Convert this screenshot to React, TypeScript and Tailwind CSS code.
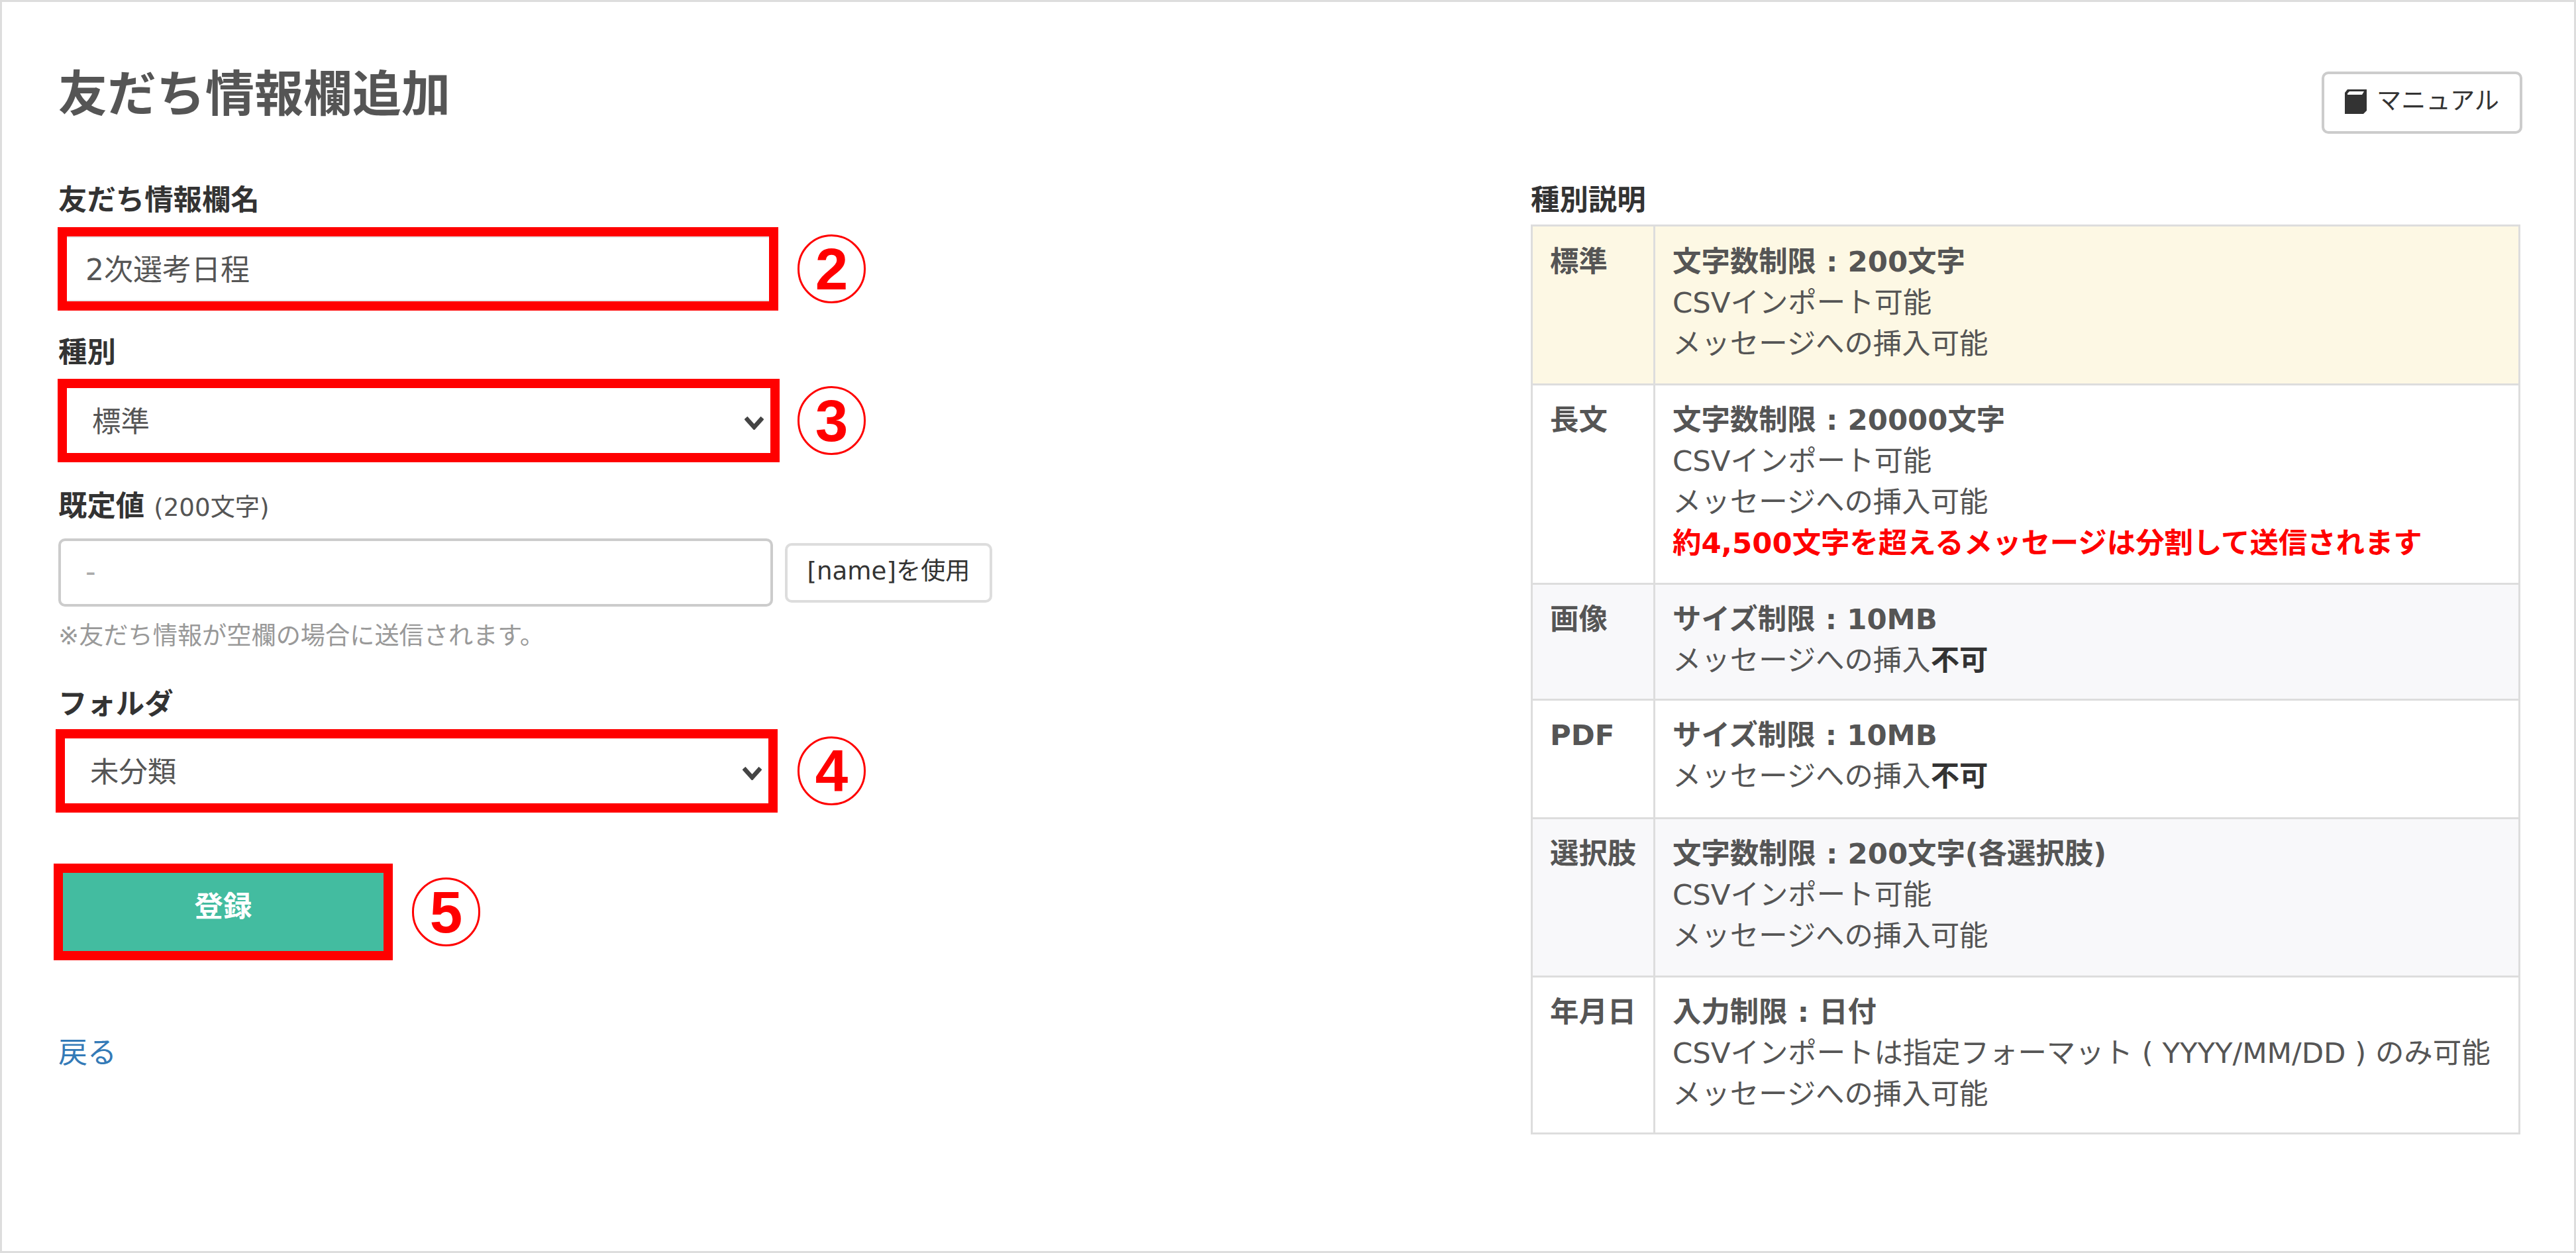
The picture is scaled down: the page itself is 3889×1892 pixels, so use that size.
import React from 'react';

const FONT = `font-['DejaVu_Sans','Noto_Sans_CJK_JP',sans-serif]`;

const Circled = ({ n, className }: { n: string; className: string }) => (
  <div className={`w-[103px] h-[104px] shrink-0 rounded-full border-[3px] border-[#ff0000] flex items-center justify-center text-[#ff0000] font-bold text-[89px] leading-none font-['Liberation_Sans',sans-serif] ${className}`}>
    {n}
  </div>
);

const Label = ({ children, className = '' }: { children: React.ReactNode; className?: string }) => (
  <div className={`h-[62px] font-bold text-[43.4px] leading-[66px] text-[#333] ${className}`}>{children}</div>
);

const Chevron = () => (
  <svg className="absolute right-[10px] top-[42px] w-[29px] h-[21px] pointer-events-none" viewBox="0 0 29 21" fill="none" stroke="#444" strokeWidth="6.5">
    <path d="M2 3 L14.5 17 L27 3" />
  </svg>
);

const SelectBox = ({ value, className }: { value: string; className: string }) => (
  <div className={`relative h-[126px] border-[14px] border-[#ff0000] bg-white ${className}`}>
    <select className="w-full h-full appearance-none bg-white pl-[38px] pt-[6px] text-[43.4px] text-[#555] outline-none">
      <option>{value}</option>
    </select>
    <Chevron />
  </div>
);

const BookIcon = () => (
  <svg width="34" height="37" viewBox="0 0 34 37" className="shrink-0">
    <path d="M4 0 H33 V32 L28 37 H0 V5 Z" fill="#333" />
    <path d="M4 6 L7 3 H29 L26 8 H4 Z" fill="#fff" />
  </svg>
);

const rows = [
  { name: '標準', bg: 'bg-[#fdf8e4]', pad: 'pt-[22px] pb-[29px]', title: '文字数制限 : 200文字', lines: ['CSVインポート可能', 'メッセージへの挿入可能'] },
  { name: '長文', bg: 'bg-white', pad: 'pt-[21px] pb-[29px]', title: '文字数制限 : 20000文字', lines: ['CSVインポート可能', 'メッセージへの挿入可能'], warn: '約4,500文字を超えるメッセージは分割して送信されます' },
  { name: '画像', bg: 'bg-[#f8f8fa]', pad: 'pt-[21px] pb-[27px]', title: 'サイズ制限 : 10MB', lines: [], ng: true },
  { name: 'PDF', bg: 'bg-white', pad: 'pt-[21px] pb-[31px]', title: 'サイズ制限 : 10MB', lines: [], ng: true },
  { name: '選択肢', bg: 'bg-[#f8f8fa]', pad: 'pt-[21px] pb-[29px]', title: '文字数制限 : 200文字(各選択肢)', lines: ['CSVインポート可能', 'メッセージへの挿入可能'] },
  { name: '年月日', bg: 'bg-white', pad: 'pt-[21px] pb-[27px]', title: '入力制限 : 日付', lines: ['CSVインポートは指定フォーマット ( YYYY/MM/DD ) のみ可能', 'メッセージへの挿入可能'] },
];

export default function App() {
  return (
    <div className={`${FONT} w-[3889px] h-[1892px] bg-white border-[3px] border-[#ddd] pl-[85px] pr-[81px] pt-[95px] text-[#555] overflow-hidden`}>
      {/* header */}
      <div className="flex items-start justify-between">
        <h1 className="h-[80px] font-bold text-[74px] leading-[88px] text-[#555]">友だち情報欄追加</h1>
        <button className="mt-[10px] -mr-[3px] w-[303px] h-[94px] pb-[4px] rounded-[10px] border-[4px] border-[#ccc] bg-white flex items-center justify-center gap-[14px] text-[37.2px] text-[#333]">
          <BookIcon />
          <span>マニュアル</span>
        </button>
      </div>

      <div className="flex justify-between mt-[67px]">
        {/* form */}
        <div className="w-[1500px]">
          <Label>友だち情報欄名</Label>
          <div className="flex items-center mt-[12px] -ml-[1px]">
            <div className="w-[1088px] h-[126px] border-[14px] border-[#ff0000] bg-white">
              <input readOnly value="2次選考日程" className="w-full h-full pl-[28px] pb-[4px] text-[44px] text-[#555] outline-none border-y-2 border-[#e6e6e6]" />
            </div>
            <Circled n="2" className="ml-[29px]" />
          </div>

          <Label className="mt-[30px]">種別</Label>
          <div className="flex items-center mt-[11px] -ml-[1px]">
            <SelectBox value="標準" className="w-[1090px]" />
            <Circled n="3" className="ml-[27px]" />
          </div>

          <Label className="mt-[33px]">
            既定値<span className="ml-[14px] font-normal text-[37.2px] text-[#555]">(200文字)</span>
          </Label>
          <div className="flex items-center gap-[18px] mt-[20px]">
            <input readOnly placeholder="-" className="w-[1079px] h-[103px] pb-[4px] rounded-[10px] border-[4px] border-[#ccc] pl-[37px] text-[43.4px] outline-none placeholder:text-[#aaa]" />
            <button className="w-[313px] h-[90px] pb-[4px] rounded-[10px] border-[4px] border-[#ddd] bg-white text-[37.2px] text-[#333]">[name]を使用</button>
          </div>
          <div className="mt-[17px] h-[50px] text-[37.2px] leading-[54px] text-[#999]">※友だち情報が空欄の場合に送信されます。</div>

          <Label className="mt-[47px]">フォルダ</Label>
          <div className="flex items-center mt-[9px] -ml-[4px]">
            <SelectBox value="未分類" className="w-[1090px]" />
            <Circled n="4" className="ml-[30px]" />
          </div>

          <div className="flex items-center mt-[77px] -ml-[7px]">
            <div className="w-[512px] h-[146px] border-[14px] border-[#ff0000]">
              <button className="w-full h-full pb-[14px] bg-[#43bca0] text-white font-bold text-[43.4px]">登録</button>
            </div>
            <Circled n="5" className="ml-[29px]" />
          </div>

          <a className="block mt-[107px] h-[62px] text-[44px] leading-[66px] text-[#337ab7]">戻る</a>
        </div>

        {/* type description */}
        <div className="w-[1494px] -ml-[2px]">
          <Label>種別説明</Label>
          <table className="mt-[8px] w-[1494px] border-collapse text-[43.4px] leading-[62px] text-[#555]">
            <tbody>
              {rows.map((r) => (
                <tr key={r.name} className={r.bg}>
                  <td className={`w-[185px] border-[3px] border-[#ddd] pl-[26px] pr-0 align-top font-bold whitespace-nowrap ${r.pad}`}>{r.name}</td>
                  <td className={`border-[3px] border-[#ddd] pl-[26px] pr-0 align-top whitespace-nowrap ${r.pad}`}>
                    <div className="font-bold">{r.title}</div>
                    {r.lines.map((l, i) => (
                      <div key={i}>{l}</div>
                    ))}
                    {r.warn && <div className="font-bold text-[#ff0000]">{r.warn}</div>}
                    {r.ng && (
                      <div>
                        メッセージへの挿入<span className="font-bold text-[#333]">不可</span>
                      </div>
                    )}
                  </td>
                </tr>
              ))}
            </tbody>
          </table>
        </div>
      </div>
    </div>
  );
}
